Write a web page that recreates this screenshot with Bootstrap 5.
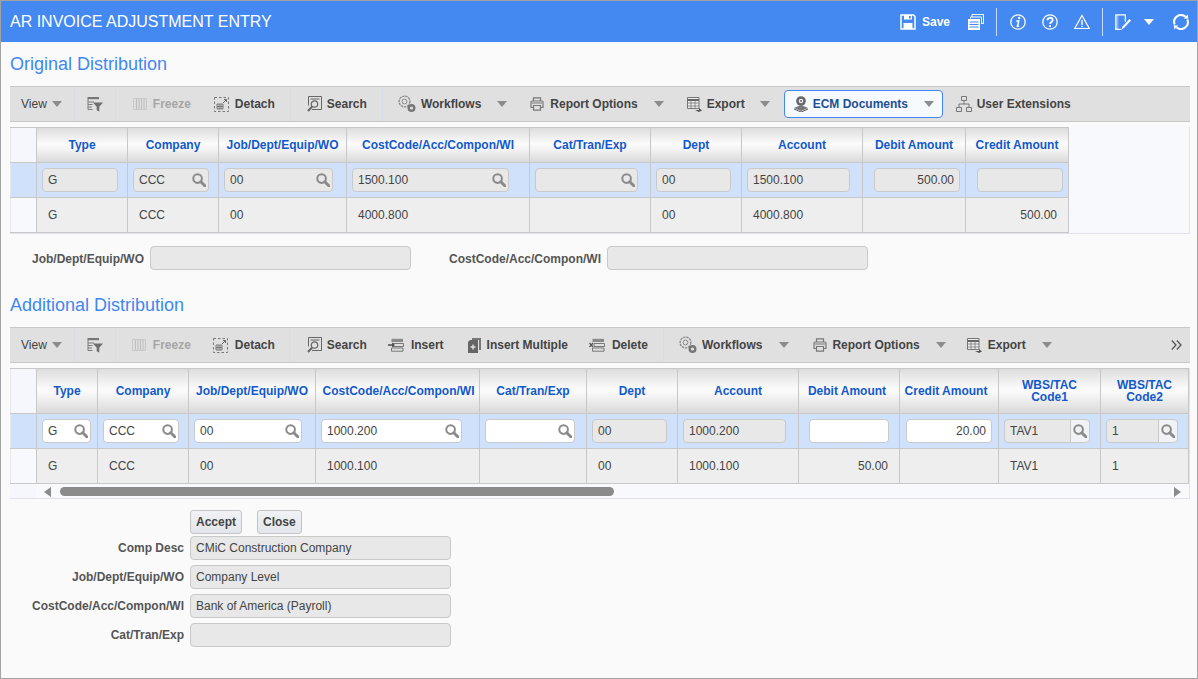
<!DOCTYPE html>
<html lang="en">
<head>
<meta charset="utf-8">
<title>AR Invoice Adjustment Entry</title>
<link rel="stylesheet" href="https://cdn.jsdelivr.net/npm/bootstrap@5.3.0/dist/css/bootstrap.min.css">
<style>
html,body{margin:0;height:100%;overflow:hidden;background:#fafafa}
body{font:12px "Liberation Sans",Arial,sans-serif;color:#444}
.frame{height:679px;border:1px solid #a3a3a3;background:#fafafa}
.apphead{height:41px;background:#4488f2;color:#fff;padding-left:9px}
.apptitle{font-size:16px;font-weight:400;margin:0;line-height:40px}
.savetxt{font-weight:700;font-size:12px}
.hsep{width:1px;height:28px;background:#c9dcfb}
.pagebody{padding:0 7px 0 9px}
.sect{font-size:18px;font-weight:400;color:#3f87f3;line-height:22px;margin:0}
.sect1{margin-top:11px}.sect2{margin-top:24px}
.tbar{height:36px;margin-top:11px;background:#e0e0e0;border-top:1px solid #c8c8c8;border-bottom:1px solid #c8c8c8;padding-left:11px;white-space:nowrap;overflow:hidden;font-weight:700;color:#444}
.tbar .plain{font-weight:400}
.tbar .off{color:#a6a6a6}
.tsep{width:1px;height:34px;background:#d6dde6;flex:none}
.car{width:0;height:0;border-left:5px solid transparent;border-right:5px solid transparent;border-top:6px solid #8c8c8c;flex:none}
.car.whitecar{border-top-color:#fff}
.ic{flex:none;display:block}
.ecm.btn{height:28px;width:159px;padding:0 0 0 8px;font:700 12px "Liberation Sans",Arial,sans-serif;color:#1d4f96;background:#f6f9fe;border:1px solid #3f87f3;border-radius:4px;display:flex;align-items:center;flex:none}
.s4{margin-left:4px}.s5{margin-left:5px}.s6{margin-left:6px}.s7{margin-left:7px}.s8{margin-left:8px}.s9{margin-left:9px}.s12{margin-left:12px}.s13{margin-left:13px}.s14{margin-left:14px}.s15{margin-left:15px}.s16{margin-left:16px}.s17{margin-left:17px}.s18{margin-left:18px}.s19{margin-left:19px}.s21{margin-left:21px}.s22{margin-left:22px}.s23{margin-left:23px}.s24{margin-left:24px}.s25{margin-left:25px}.s38{margin-left:38px}
.gridwrap{margin-top:5px;background:#f8f9fd;border-right:1px solid #dfe3ea;border-bottom:1px solid #dfe3ea;overflow:hidden}
.gw1{height:107px}.gw2{height:131px}
.table.dg{table-layout:fixed;margin:0;border-collapse:collapse;font-size:12px;color:#444;--bs-table-bg:transparent;border-color:#c8c8c8}
.dg1{width:1059px}.dg2{width:1179px}
.table.dg>:not(caption)>*>*{padding:0;border:1px solid #c8c8c8;vertical-align:middle;box-shadow:none;color:#444}
.table.dg>thead>tr>th{background:linear-gradient(#dedede,#fbfbfb 45%,#f4f4f4 60%,#d9d9d9);color:#1259cc;font-weight:700;text-align:center;line-height:12px}
.table.dg>thead>tr>th.rh,.table.dg>tbody>tr>td.rh{background:#f5f7fc;border-left-color:#e4e8ef}
.table.dg>thead>tr>th.nudge-r{padding-left:2px}
.table.dg>thead>tr>th.nudge-l4{padding-right:4px}
.table.dg>thead>tr>th.nudge-l6{padding-right:6px}
.dg1 thead tr{height:35px}.dg2 thead tr{height:45px}
.dg tbody tr{height:35px}
.table.dg>tbody>tr.ed>td{background:#cfe1fb}
.table.dg>tbody>tr.ro>td{background:#eee;padding-left:11px}
.table.dg>tbody>tr.ro>td.num{text-align:right;padding-left:0;padding-right:11px}
.table.dg>tbody>tr.ro>td.rh{background:#f8f9fd}
.fldbox{position:relative}
.fld.form-control{height:24px;min-height:0;padding:0 5px;font:12px "Liberation Sans",Arial,sans-serif;color:#444;background:#e8e8e8;border:1px solid #c9c9c9;border-radius:4px;box-shadow:none}
.fld.on.form-control{background:#fff}
.fld.end{text-align:right}
.mag{position:absolute;right:3px;top:5px}
.input-group .fld.form-control{border-radius:4px 0 0 4px}
.wbsbtn.input-group-text{height:24px;padding:0 2px;background:#f0f2f6;border:1px solid #c9c9c9;border-radius:0 4px 4px 0}
/* widths and inset of the field in each grid column */
.dg1 .ed td:nth-child(2) .fb{margin-left:5px;width:76px}
.dg1 .ed td:nth-child(3) .fb{margin-left:5px;width:76px}
.dg1 .ed td:nth-child(4) .fb{margin-left:5px;width:109px}
.dg1 .ed td:nth-child(5) .fb{margin-left:5px;width:157px}
.dg1 .ed td:nth-child(6) .fb{margin-left:5px;width:103px}
.dg1 .ed td:nth-child(7) .fb{margin-left:5px;width:75px}
.dg1 .ed td:nth-child(8) .fb{margin-left:5px;width:103px}
.dg1 .ed td:nth-child(9) .fb{margin-left:11px;width:86px}
.dg1 .ed td:nth-child(10) .fb{margin-left:11px;width:86px}
.dg2 .ed td:nth-child(2) .fb{margin-left:5px;width:49px}
.dg2 .ed td:nth-child(3) .fb{margin-left:5px;width:76px}
.dg2 .ed td:nth-child(4) .fb{margin-left:5px;width:108px}
.dg2 .ed td:nth-child(5) .fb{margin-left:5px;width:141px}
.dg2 .ed td:nth-child(6) .fb{margin-left:5px;width:90px}
.dg2 .ed td:nth-child(7) .fb{margin-left:5px;width:75px}
.dg2 .ed td:nth-child(8) .fb{margin-left:5px;width:103px}
.dg2 .ed td:nth-child(9) .fb{margin-left:10px;width:80px}
.dg2 .ed td:nth-child(10) .fb{margin-left:6px;width:86px}
.dg2 .ed td:nth-child(11) .fb{margin-left:5px;width:86px}
.dg2 .ed td:nth-child(12) .fb{margin-left:5px;width:72px}
.c-0{width:26px}.c-61{width:61px}.c-88{width:88px}.c-91{width:91px}.c-99{width:99px}.c-101{width:101px}.c-102{width:102px}.c-103{width:103px}.c-107{width:107px}.c-121{width:121px}.c-127{width:127px}.c-128{width:128px}.c-164{width:164px}.c-183{width:183px}
.sbar{height:15px;background:#f8f9fd}
.sbar .rhs{width:26px;height:15px;background:#f5f7fc}
.thumb{width:554px;height:9px;background:#8b8b8b;border-radius:5px}
.arl,.arr{width:0;height:0;border-top:5px solid transparent;border-bottom:5px solid transparent}
.arl{border-right:7px solid #8b8b8b}
.arr{border-left:7px solid #8b8b8b}
.lbl{font-weight:700;color:#555;white-space:nowrap}
.lbls{margin-top:12px;padding-left:22px}
.lbls .lbl{padding-top:2px}
.w261{width:261px;flex:none}
.w174{width:174px;flex:none;text-align:right}
.actions{margin-top:11px;padding-left:180px}
.act.btn{height:24px;padding:0 5px;font:700 12px "Liberation Sans",Arial,sans-serif;color:#444;background:linear-gradient(#f0f2f5,#e3e6ea);border:1px solid #c4c4c4;border-radius:3px}
.infoform{margin-top:2px}
.gap5{gap:5px}
</style>
</head>
<body>
<svg class="d-none" xmlns="http://www.w3.org/2000/svg">
 <symbol id="i-mag" viewBox="0 0 14 14"><circle cx="5.600" cy="5.600" r="4.300" fill="none" stroke="#8a8a8a" stroke-width="2"/><path d="M8.800 8.800l4 4" stroke="#8a8a8a" stroke-width="3" stroke-linecap="round"/></symbol>
 <symbol id="i-filter" viewBox="0 0 16 16"><path d="M.5 1h11.500v2.200H.5z" fill="#777"/><path d="M1 3v10.500h4.500M1 6h6M1 8.500h4.500M1 11h4" fill="none" stroke="#7c7c7c"/><path d="M6 6.500h10l-3.700 4.300v4.700l-2.600-1.300v-3.400z" fill="#6f6f6f"/></symbol>
 <symbol id="i-freeze" viewBox="0 0 14 14"><path d="M.5 1.500h13v11H.5z" fill="#ddd" stroke="#c9c9c9"/><path d="M3.500 2v10M6 2v10M8.500 2v10M11 2v10" stroke="#c0c0c0"/></symbol>
 <symbol id="i-detach" viewBox="0 0 15 15"><path d="M.5.500h14v14H.5z" fill="none" stroke="#777" stroke-dasharray="2.500 2"/><path d="M3 7h6v5H3zM5 7v5M7 7v5M3 9.500h6" fill="none" stroke="#666" stroke-width=".8"/><path d="M9 6l3.500-3.500M10 2.500h2.500V5" fill="none" stroke="#666"/></symbol>
 <symbol id="i-search" viewBox="0 0 15 16"><path d="M1.500.5h13v13H5" fill="none" stroke="#666"/><path d="M1.500.5v9M3.500 3h9" fill="none" stroke="#666"/><circle cx="7.500" cy="8" r="3.200" fill="none" stroke="#666" stroke-width="1.200"/><path d="M5.200 10.500L1 15" stroke="#666" stroke-width="2"/></symbol>
 <symbol id="i-gears" viewBox="0 0 18 18"><circle cx="6.500" cy="6.500" r="5.400" fill="none" stroke="#8a8a8a" stroke-width="1.300" stroke-dasharray="2.400 .8"/><circle cx="6.500" cy="6.500" r="2.400" fill="none" stroke="#8a8a8a"/><circle cx="13.500" cy="13" r="4" fill="#777"/><circle cx="13.500" cy="13" r="1.600" fill="#e0e0e0"/></symbol>
 <symbol id="i-print" viewBox="0 0 14 14"><path d="M3.500 4V.8h7V4M3 10.500H1V5a1 1 0 0 1 1-1h10a1 1 0 0 1 1 1v5.500h-2" fill="none" stroke="#777" stroke-width="1.200"/><path d="M3.500 8.500h7v4.700h-7z" fill="none" stroke="#777" stroke-width="1.200"/><path d="M2 6h10" stroke="#777"/></symbol>
 <symbol id="i-export" viewBox="0 0 15 15"><path d="M.5.500h11.500v11H.5z" fill="#eee" stroke="#777"/><path d="M.5 3h11.500" stroke="#666" stroke-width="2"/><path d="M.5 6h11.500M.5 9h11.500M4 3v8.500M8 3v8.500" stroke="#777" stroke-width=".8"/><path d="M8 13h4v-2l3 2.500-3 1.500z" fill="#555"/></symbol>
 <symbol id="i-ecm" viewBox="0 0 16 16"><circle cx="8" cy="5" r="4.800" fill="#666"/><circle cx="8" cy="5" r="2.200" fill="#f0f4fb"/><circle cx="8" cy="5" r="1" fill="#666"/><path d="M8 9l7 3-7 3-7-3z" fill="#777"/><path d="M1 13l7 3 7-3" fill="none" stroke="#555"/></symbol>
 <symbol id="i-org" viewBox="0 0 16 16"><path d="M5.500.5h5v4h-5zM.5 11.500h5v4h-5zM10.500 11.500h5v4h-5z" fill="none" stroke="#777"/><path d="M8 4.500V8M3 11.500V8h10v3.500" fill="none" stroke="#777"/></symbol>
 <symbol id="i-insert" viewBox="0 0 16 14"><path d="M3.500.8h11.500v3.200H3.500z" fill="#8a8a8a"/><path d="M3.500 10h11.500v3.200H3.500z" fill="none" stroke="#777"/><path d="M5 5.500h10.500v3H5z" fill="none" stroke="#777"/><path d="M0 7h6" stroke="#555" stroke-width="1.600"/><path d="M4 4.500L7 7 4 9.500z" fill="#555"/></symbol>
 <symbol id="i-multi" viewBox="0 0 13 15"><path d="M4 0h9v12h-2V2H4z" fill="#777"/><path d="M0 4l2-2h8v13H0z" fill="#666"/><path d="M5 6.500v5M2.500 9h5" stroke="#e0e0e0" stroke-width="1.400"/></symbol>
 <symbol id="i-delete" viewBox="0 0 16 14"><path d="M3.500.8h11.500v3.200H3.500z" fill="#8a8a8a"/><path d="M3.500 10h11.500v3.200H3.500z" fill="none" stroke="#777"/><path d="M5 5.500h10.500v3H5z" fill="none" stroke="#777"/><path d="M.5 5l3.500 4M4 5L.5 9" stroke="#555" stroke-width="1.200"/></symbol>
 <symbol id="i-chev" viewBox="0 0 11 10"><path d="M.8.500L5 5 .8 9.500M5.800.500L10 5 5.800 9.500" fill="none" stroke="#555" stroke-width="1.300"/></symbol>
 <symbol id="i-save" viewBox="0 0 16 16"><path d="M1 1h12.500L15 2.500V15H1z" fill="none" stroke="#fff" stroke-width="1.500"/><path d="M4 1h8v4.500H4z" fill="#fff"/><path d="M9 2h1.800v2.500H9z" fill="#4488f2"/><path d="M3.500 9h9v6h-9z" fill="#fff"/></symbol>
 <symbol id="i-stack" viewBox="0 0 16 16"><path d="M4 3V.5h11.500v9H13M2.500 4.500V3h11v7" fill="none" stroke="#fff"/><path d="M0 5h12v11H0z" fill="#fff"/><path d="M1.500 8h9M1.500 10.500h9M1.500 13h9" stroke="#4488f2"/></symbol>
 <symbol id="i-info" viewBox="0 0 16 16"><circle cx="8" cy="8" r="7.200" fill="none" stroke="#fff" stroke-width="1.300"/><circle cx="9.200" cy="4" r="1.200" fill="#fff"/><path d="M6.300 7h2.500l-1.400 5.200h1.700" fill="none" stroke="#fff" stroke-width="1.500"/></symbol>
 <symbol id="i-help" viewBox="0 0 16 16"><circle cx="8" cy="8" r="7.200" fill="none" stroke="#fff" stroke-width="1.300"/><path d="M5.500 6.200C5.500 3 10.700 3 10.700 6c0 2-2.600 2-2.600 4" fill="none" stroke="#fff" stroke-width="1.800"/><circle cx="8.100" cy="12.200" r="1.100" fill="#fff"/></symbol>
 <symbol id="i-warn" viewBox="0 0 16 16"><path d="M8 1.500L15.300 14.500H.7z" fill="none" stroke="#fff" stroke-width="1.200"/><path d="M8 6v5" stroke="#fff" stroke-width="1.400"/><circle cx="8" cy="12.500" r=".8" fill="#fff"/></symbol>
 <symbol id="i-note" viewBox="0 0 16 16"><path d="M6.500 15.300H.8V.8h9.500v7" fill="none" stroke="#fff" stroke-width="1.200"/><path d="M1 1h2.500v14H1z" fill="#fff" opacity=".35"/><path d="M6.500 15.500l1-3 7-7.500 1.500 1.500-7 7.500z" fill="#fff"/></symbol>
 <symbol id="i-sync" viewBox="0 0 16 16"><path d="M1.700 10.500A6.800 6.800 0 0 1 12.500 2.800" fill="none" stroke="#fff" stroke-width="2"/><path d="M14.300 5.500A6.800 6.800 0 0 1 3.500 13.200" fill="none" stroke="#fff" stroke-width="2"/><path d="M10.800 4.500l4.400.2L14.800.4zM5.200 11.500l-4.400-.2.400 4.300z" fill="#fff"/></symbol>
</svg>

<div class="frame">
  <header class="apphead d-flex align-items-center">
    <h1 class="apptitle">AR INVOICE ADJUSTMENT ENTRY</h1>
    <div class="ms-auto d-flex align-items-center">
      <svg class="ic" width="16" height="16"><use href="#i-save"/></svg>
      <span class="savetxt s6">Save</span>
      <svg class="ic s18" width="16" height="16"><use href="#i-stack"/></svg>
      <span class="hsep s12"></span>
      <svg class="ic s13" width="16" height="16"><use href="#i-info"/></svg>
      <svg class="ic s16" width="16" height="16"><use href="#i-help"/></svg>
      <svg class="ic s16" width="16" height="16"><use href="#i-warn"/></svg>
      <span class="hsep s12"></span>
      <svg class="ic s12" width="16" height="16"><use href="#i-note"/></svg>
      <span class="car s13 whitecar"></span>
      <svg class="ic s19" width="16" height="16"><use href="#i-sync"/></svg>
      <span class="s8"></span>
    </div>
  </header>

  <main class="pagebody">
    <h2 class="sect sect1">Original Distribution</h2>
    <div class="tbar d-flex align-items-center">
      <span class="plain">View</span><span class="car s5"></span>
      <span class="tsep s12"></span>
      <svg class="ic s12" width="16" height="16"><use href="#i-filter"/></svg>
      <span class="tsep s12"></span>
      <svg class="ic s17" width="14" height="14"><use href="#i-freeze"/></svg><span class="off s6">Freeze</span>
      <svg class="ic s23" width="15" height="15"><use href="#i-detach"/></svg><span class="s6">Detach</span>
      <span class="tsep s15"></span>
      <svg class="ic s16" width="15" height="16"><use href="#i-search"/></svg><span class="s5">Search</span>
      <span class="tsep s15"></span>
      <svg class="ic s15" width="18" height="18"><use href="#i-gears"/></svg><span class="s5">Workflows</span><span class="car s16"></span>
      <svg class="ic s23" width="14" height="14"><use href="#i-print"/></svg><span class="s6">Report Options</span><span class="car s16"></span>
      <svg class="ic s23" width="15" height="15"><use href="#i-export"/></svg><span class="s5">Export</span><span class="car s15"></span>
      <button type="button" class="btn ecm s14"><svg class="ic" width="16" height="16"><use href="#i-ecm"/></svg><span class="s4">ECM Documents</span><span class="car s16"></span></button>
      <svg class="ic s13" width="16" height="16"><use href="#i-org"/></svg><span class="s5">User Extensions</span>
    </div>

    <div class="gridwrap gw1">
      <table class="table dg dg1">
        <colgroup><col class="c-0"><col class="c-91"><col class="c-91"><col class="c-128"><col class="c-183"><col class="c-121"><col class="c-91"><col class="c-121"><col class="c-103"><col class="c-103"></colgroup>
        <thead><tr><th class="rh"></th><th>Type</th><th>Company</th><th>Job/Dept/Equip/WO</th><th>CostCode/Acc/Compon/WI</th><th>Cat/Tran/Exp</th><th>Dept</th><th>Account</th><th>Debit Amount</th><th>Credit Amount</th></tr></thead>
        <tbody>
          <tr class="ed">
            <td class="rh"></td>
            <td><div class="fb"><input class="form-control fld" readonly value="G"></div></td>
            <td><div class="fb fldbox"><input class="form-control fld" readonly value="CCC"><svg class="mag" width="14" height="14"><use href="#i-mag"/></svg></div></td>
            <td><div class="fb fldbox"><input class="form-control fld" readonly value="00"><svg class="mag" width="14" height="14"><use href="#i-mag"/></svg></div></td>
            <td><div class="fb fldbox"><input class="form-control fld" readonly value="1500.100"><svg class="mag" width="14" height="14"><use href="#i-mag"/></svg></div></td>
            <td><div class="fb fldbox"><input class="form-control fld" readonly value=""><svg class="mag" width="14" height="14"><use href="#i-mag"/></svg></div></td>
            <td><div class="fb"><input class="form-control fld" readonly value="00"></div></td>
            <td><div class="fb"><input class="form-control fld" readonly value="1500.100"></div></td>
            <td><div class="fb"><input class="form-control fld end" readonly value="500.00"></div></td>
            <td><div class="fb"><input class="form-control fld" readonly value=""></div></td>
          </tr>
          <tr class="ro"><td class="rh"></td><td>G</td><td>CCC</td><td>00</td><td>4000.800</td><td></td><td>00</td><td>4000.800</td><td></td><td class="num">500.00</td></tr>
        </tbody>
      </table>
    </div>

    <div class="lbls d-flex align-items-center">
      <label class="lbl">Job/Dept/Equip/WO</label><input class="form-control fld w261 s6" readonly value="">
      <label class="lbl s38">CostCode/Acc/Compon/WI</label><input class="form-control fld w261 s6" readonly value="">
    </div>

    <h2 class="sect sect2">Additional Distribution</h2>
    <div class="tbar d-flex align-items-center">
      <span class="plain">View</span><span class="car s5"></span>
      <span class="tsep s12"></span>
      <svg class="ic s12" width="16" height="16"><use href="#i-filter"/></svg>
      <span class="tsep s12"></span>
      <svg class="ic s16" width="14" height="14"><use href="#i-freeze"/></svg><span class="off s7">Freeze</span>
      <svg class="ic s22" width="15" height="15"><use href="#i-detach"/></svg><span class="s7">Detach</span>
      <span class="tsep s14"></span>
      <svg class="ic s17" width="15" height="16"><use href="#i-search"/></svg><span class="s5">Search</span>
      <svg class="ic s21" width="16" height="14"><use href="#i-insert"/></svg><span class="s7">Insert</span>
      <svg class="ic s24" width="13" height="15"><use href="#i-multi"/></svg><span class="s6">Insert Multiple</span>
      <svg class="ic s21" width="16" height="14"><use href="#i-delete"/></svg><span class="s7">Delete</span>
      <span class="tsep s15"></span>
      <svg class="ic s15" width="18" height="18"><use href="#i-gears"/></svg><span class="s5">Workflows</span><span class="car s17"></span>
      <svg class="ic s24" width="14" height="14"><use href="#i-print"/></svg><span class="s5">Report Options</span><span class="car s16"></span>
      <svg class="ic s21" width="15" height="15"><use href="#i-export"/></svg><span class="s6">Export</span><span class="car s16"></span>
      <svg class="ic ms-auto me-2" width="11" height="10"><use href="#i-chev"/></svg>
    </div>

    <div class="gridwrap gw2">
      <table class="table dg dg2">
        <colgroup><col class="c-0"><col class="c-61"><col class="c-91"><col class="c-127"><col class="c-164"><col class="c-107"><col class="c-91"><col class="c-121"><col class="c-101"><col class="c-99"><col class="c-102"><col class="c-88"></colgroup>
        <thead><tr><th class="rh"></th><th>Type</th><th>Company</th><th>Job/Dept/Equip/WO</th><th class="nudge-r">CostCode/Acc/Compon/WI</th><th>Cat/Tran/Exp</th><th>Dept</th><th>Account</th><th class="nudge-l4">Debit Amount</th><th class="nudge-l6">Credit Amount</th><th>WBS/TAC<br>Code1</th><th>WBS/TAC<br>Code2</th></tr></thead>
        <tbody>
          <tr class="ed">
            <td class="rh"></td>
            <td><div class="fb fldbox"><input class="form-control fld on" value="G"><svg class="mag" width="14" height="14"><use href="#i-mag"/></svg></div></td>
            <td><div class="fb fldbox"><input class="form-control fld on" value="CCC"><svg class="mag" width="14" height="14"><use href="#i-mag"/></svg></div></td>
            <td><div class="fb fldbox"><input class="form-control fld on" value="00"><svg class="mag" width="14" height="14"><use href="#i-mag"/></svg></div></td>
            <td><div class="fb fldbox"><input class="form-control fld on" value="1000.200"><svg class="mag" width="14" height="14"><use href="#i-mag"/></svg></div></td>
            <td><div class="fb fldbox"><input class="form-control fld on" value=""><svg class="mag" width="14" height="14"><use href="#i-mag"/></svg></div></td>
            <td><div class="fb"><input class="form-control fld" readonly value="00"></div></td>
            <td><div class="fb"><input class="form-control fld" readonly value="1000.200"></div></td>
            <td><div class="fb"><input class="form-control fld on" value=""></div></td>
            <td><div class="fb"><input class="form-control fld on end" value="20.00"></div></td>
            <td><div class="fb input-group flex-nowrap"><input class="form-control fld" readonly value="TAV1"><span class="input-group-text wbsbtn"><svg width="14" height="14"><use href="#i-mag"/></svg></span></div></td>
            <td><div class="fb input-group flex-nowrap"><input class="form-control fld" readonly value="1"><span class="input-group-text wbsbtn"><svg width="14" height="14"><use href="#i-mag"/></svg></span></div></td>
          </tr>
          <tr class="ro"><td class="rh"></td><td>G</td><td>CCC</td><td>00</td><td>1000.100</td><td></td><td>00</td><td>1000.100</td><td class="num">50.00</td><td></td><td>TAV1</td><td>1</td></tr>
        </tbody>
      </table>
      <div class="sbar d-flex align-items-center">
        <span class="rhs"></span>
        <span class="arl s8"></span>
        <span class="thumb s9"></span>
        <span class="arr ms-auto me-2"></span>
      </div>
    </div>

    <div class="actions d-flex">
      <button type="button" class="btn act">Accept</button>
      <button type="button" class="btn act s15">Close</button>
    </div>
    <div class="infoform d-flex flex-column gap5">
      <div class="d-flex align-items-center"><label class="lbl w174">Comp Desc</label><input class="form-control fld w261 s6" readonly value="CMiC Construction Company"></div>
      <div class="d-flex align-items-center"><label class="lbl w174">Job/Dept/Equip/WO</label><input class="form-control fld w261 s6" readonly value="Company Level"></div>
      <div class="d-flex align-items-center"><label class="lbl w174">CostCode/Acc/Compon/WI</label><input class="form-control fld w261 s6" readonly value="Bank of America (Payroll)"></div>
      <div class="d-flex align-items-center"><label class="lbl w174">Cat/Tran/Exp</label><input class="form-control fld w261 s6" readonly value=""></div>
    </div>
  </main>
</div>
</body>
</html>
